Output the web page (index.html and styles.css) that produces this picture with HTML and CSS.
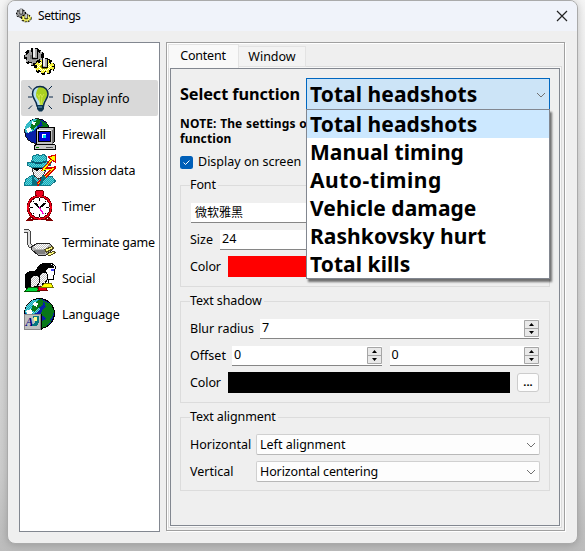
FILE: index.html
```html
<!DOCTYPE html>
<html lang="en">
<head>
<meta charset="utf-8">
<title>Settings</title>
<link rel="stylesheet" href="styles.css">
</head>
<body>
<svg class="defs" width="0" height="0">
  <defs>
    <pattern id="dither" width="2" height="2" patternUnits="userSpaceOnUse"><rect width="2" height="2" fill="#c0c0c0"/><path d="M0 0h1v1H0zM1 1h1v1H1z" fill="#fff"/></pattern>
    <pattern id="gold" width="2" height="2" patternUnits="userSpaceOnUse"><rect width="2" height="2" fill="#ffff00"/><path d="M0 0h1v1H0zM1 1h1v1H1z" fill="#fff"/></pattern>
    <pattern id="teal" width="2" height="2" patternUnits="userSpaceOnUse"><rect width="2" height="2" fill="#00b0c0"/><path d="M0 0h1v1H0zM1 1h1v1H1z" fill="#70c8d0"/></pattern>
    <symbol id="gears" viewBox="0 0 32 32">
      <ellipse cx="10" cy="11" rx="8.5" ry="6.8" fill="none" stroke="#000" stroke-width="4" stroke-dasharray="3.5 2"/>
      <ellipse cx="10" cy="11" rx="8" ry="6.3" fill="#999" stroke="#000"/>
      <ellipse cx="10" cy="11" rx="8" ry="6.3" fill="none" stroke="#a8a8a8" stroke-width="3" stroke-dasharray="2 3.5" stroke-dashoffset="-.7"/>
      <ellipse cx="10" cy="11" rx="5.500" ry="4" fill="#a0a0a0"/><ellipse cx="10" cy="11" rx="4" ry="3" fill="#777"/>
      <path d="M8 2h5v10H8z" fill="#aaa" stroke="#000"/><path d="M9 2h2v9H9z" fill="#eee"/>
      <ellipse cx="20.500" cy="20.500" rx="8.800" ry="6.200" fill="none" stroke="#000" stroke-width="4" stroke-dasharray="3.5 2"/>
      <ellipse cx="20.500" cy="20.500" rx="8" ry="5.600" fill="url(#gold)" stroke="#000"/>
      <ellipse cx="20.500" cy="20.500" rx="8" ry="5.500" fill="none" stroke="#f4ef40" stroke-width="3" stroke-dasharray="2.6 2.9" stroke-dashoffset="-.5"/>
      <ellipse cx="20.500" cy="20.500" rx="6.500" ry="4.300" fill="url(#gold)"/>
      <ellipse cx="20.500" cy="20.500" rx="4" ry="2.600" fill="#808000"/>
      <path d="M18 12h5v9h-5z" fill="#aaa" stroke="#000"/><path d="M19 12h2v8h-2z" fill="#eee"/>
    </symbol>
    <symbol id="globe" viewBox="0 0 32 32">
      <circle cx="15.500" cy="15.500" r="14.800" fill="#0820a8" stroke="#000"/>
      <path d="M9 2 15 1l3 4-3 3 1 3-4 4-5 2-5 1L1 12 3 7z" fill="url(#teal)"/>
      <path d="m12 4 5-3 3 2-2 5-4 2-3 4-4-2 2-5zM20 3l7 3 3 7-2 7-4 3-3-4-4-2 1-5 4-3z" fill="#087818"/>
      <path d="m10 4 4 1-1 4-4-2zM2 13l5-2 2 4-4 3z" fill="#fff"/>
      <path d="m18 23 7-3 2 3-6 6-4 1z" fill="#087818"/>
    </symbol>
  </defs>
</svg>
<div class="window">
  <header class="titlebar">
    <svg class="app-icon"><use href="#gears"/></svg>
    <span class="title">Settings</span>
    <svg class="close" viewBox="0 0 12 12"><path d="m1 1 10 10M11 1 1 11" stroke="#222" stroke-width="1.2"/></svg>
  </header>
  <main class="body">
    <nav class="sidebar">
      <a class="item"><svg class="icon"><use href="#gears"/></svg><span>General</span></a>
      <a class="item selected"><svg class="icon bulb" viewBox="0 0 32 32">
        <path d="m4.500 4 3.500 3.500M28 4l-3.500 3.500M4 15h4M25 15h4M4.500 27 8 23.500M28 27l-3.500-3.500" stroke="#0b2948" fill="none"/>
        <path d="M16 4.500c-5 0-7.500 3.500-7.500 7.500 0 5 4 6 4.500 12h6.500c.5-6 4.500-7 4.500-12 0-4-3-7.500-8-7.500z" fill="#b4dcf2"/>
        <path d="M15 5c6-1 9 3 8.500 7.500-.5 4-4 5-5 11L16 23c1-4-4-6-4-10 0-3 1-6 3-8z" fill="#a9d020"/>
        <path d="m13 12 2 3 1.500-3 1.500 3 2-3M15 15l1 8M18 15l-1 8" fill="none" stroke="#e4ec60" stroke-width=".7"/>
        <path d="M16 4.500c-5 0-7.500 3.500-7.500 7.500 0 5 4 6 4.500 12h6.500c.5-6 4.500-7 4.500-12 0-4-3-7.500-8-7.500z" fill="none" stroke="#0b2948" stroke-width="1.500"/>
        <path d="M13 23h7v4l-2 2.500h-3L13 27z" fill="#0b3450"/><path d="M14 25h4" stroke="#70a8c8"/>
      </svg><span>Display info</span></a>
      <a class="item"><svg class="icon" viewBox="0 0 32 32">
        <use href="#globe" width="27" height="27"/>
        <path d="M12.500 11.500 15 9.500h15v14l-2.500 3.500h-15z" fill="#c0c0c0" stroke="#000"/>
        <path d="M28 12.500v14l2-3v-14z" fill="#707070"/>
        <path d="M14 13h12v10H14z" fill="#0000d8" stroke="#000"/><path d="M13 12.500h14" stroke="#fff"/>
        <path d="M18 16h4v4h-4z" fill="#00d8f0"/><path d="M18 16h4v1h-3v3h-1z" fill="#fff"/>
        <path d="M10 28.500 12 26.500h18l1.500 1v3.500H10z" fill="#c8c8c8" stroke="#000"/><path d="M22 29.500h7" stroke="#555"/><path d="M12 29.500h3" stroke="#080"/>
      </svg><span>Firewall</span></a>
      <a class="item"><svg class="icon" viewBox="0 0 32 32">
        <path d="m.5 31.500 1-6 7-4.500h11l9 2 3 4-5 4.500z" fill="url(#teal)" stroke="#107888"/>
        <path d="M8.500 9h13v8l-3 6-4 2-4-3-2-5z" fill="url(#dither)" stroke="#333"/>
        <path d="M7 12h7l2 1 2-1h5v3l-3 2-3-2h-1l-3 2-4-2z" fill="#000"/>
        <path d="M7.500 8 9 2l4-1.500 3 1 4-1 2 2 1 5 4 1-1 3-7 2H8L3 11l.5-2z" fill="url(#teal)" stroke="#107888"/>
        <path d="m8 7 5 1.500L22 7v1.500l-9 2-5-2z" fill="#085870"/>
        <path d="m13 31 17-17-10 1L30 3" stroke="#d80000" stroke-width="3" fill="none"/><path d="m13 31 16-16-10 1L30 3" stroke="#ff0" stroke-width="1.200" fill="none"/>
        <path d="m24 3 7-2v7z" fill="#ff0" stroke="#d80000"/><path d="m8 21 5 7 1 3H8zM19 20l3 4-5 7h-2z" fill="#087080"/>
      </svg><span>Mission data</span></a>
      <a class="item"><svg class="icon" viewBox="0 0 32 32">
        <path d="m7 27-3 3h4l3-2M24 27l3 3h-4l-3-2" stroke="#800000" stroke-width="2" fill="none"/>
        <path d="M14 5h3v3h-3z" fill="#b00"/><ellipse cx="15.500" cy="3" rx="4.500" ry="2.600" fill="#f00020" stroke="#700000"/>
        <circle cx="15.500" cy="17.500" r="11.500" fill="#fff" stroke="#600" stroke-width="2.800"/><circle cx="15.500" cy="17.500" r="11.500" fill="none" stroke="#f00018" stroke-width="1.400"/>
        <path d="M15.500 8v3M15.500 24v3M6 17.500h3M22 17.500h3M9 11l1 1M22 11l-1 1M9 24l1-1M22 24l-1-1" stroke="#000"/>
        <path d="m11 13 4.500 5 6-5" stroke="#000" stroke-width="1.800" fill="none"/><path d="m15.500 17.500 4 7" stroke="#f0c" stroke-width="1.300"/>
      </svg><span>Timer</span></a>
      <a class="item"><svg class="icon" viewBox="0 0 32 32">
        <path d="M0 5h3q2 0 2 2v9q0 5 5 5" stroke="#444" stroke-width="4" fill="none"/><path d="M0 5h3q2 0 2 2v9q0 5 5 5" stroke="#e0e0e0" stroke-width="2" fill="none"/>
        <path d="m7.500 21 6-4h11l2.500 2v6l-5 4h-8l-6-5z" fill="#b4b4b4" stroke="#222"/><path d="m9 21 5-3h10l2 1-5 4h-8z" fill="url(#dither)"/>
        <path d="m9 24 5 4h7v-4h-8z" fill="#808080"/>
        <path d="m20.500 23.500 8-3 1 2-7 3.500zM23 28l7-3 1.500 1.500L25 30z" fill="#ffff80" stroke="#554c20"/>
      </svg><span>Terminate game</span></a>
      <a class="item"><svg class="icon" viewBox="0 0 32 32">
        <path d="M15 4c4-4 13-4 16 0v3l-1 2 1 3-2 2v3h-5l1 5-7-2z" fill="#fff" stroke="#000"/>
        <path d="M12 9c0-8 13-9 18-5v2h-6l-3 3v7l-5 4z" fill="#000"/>
        <path d="M11 11c4-5 11-4 12 1v6l-2 3h-3l2 3-8 1z" fill="url(#dither)" stroke="#000"/>
        <path d="M9 10c3-4 9-5 12-2l1 3h-4l-2 3v6l-4 2z" fill="#000"/>
        <path d="M3 12c5-3 12-1 12 3v6l-2 3h-3l1 3H3z" fill="url(#dither)" stroke="#000"/>
        <path d="M1 26V13c2-5 11-6 15-1l-1 2H9l-2 3v7l-3 4z" fill="#000"/>
        <path d="m1 29 3-3 9-1 2 4z" fill="#00d83a" stroke="#050"/><path d="m14 28 1-3 6-1 2 4z" fill="#f00018" stroke="#700"/><path d="m17 25 3-3 7-1 2 4z" fill="#ff0" stroke="#770"/>
        <path d="M27 7h3v2h-3z" fill="#44f"/>
      </svg><span>Social</span></a>
      <a class="item"><svg class="icon" viewBox="0 0 32 32">
        <use href="#globe" width="32" height="32"/>
        <path d="M.500 16.500h16v15H.5z" fill="#c0c0c0" stroke="#888"/><path d="M17 16v16H0" fill="none" stroke="#000"/>
        <text x="1.500" y="28" class="glyph">A</text><path d="M9 18h6v6l-2 4H8v-2l3-1z" fill="#087880"/><path d="M10 19h3v4h-3z" fill="#ff8"/>
      </svg><span>Language</span></a>
    </nav>
    <section class="tabs">
      <div class="tabbar"><span class="tab active">Content</span><span class="tab">Window</span></div>
      <div class="page">
        <div class="function-row">
          <span class="heading">Select function</span>
          <div class="function-select">
            <span class="option chosen">Total headshots</span><svg class="chevron" viewBox="0 0 10 6"><path d="m1 1 4 4 4-4"/></svg>
            <div class="popup">
              <div class="option current">Total headshots</div><div class="option">Manual timing</div><div class="option auto">Auto-timing</div><div class="option">Vehicle damage</div><div class="option">Rashkovsky hurt</div><div class="option">Total kills</div>
            </div>
          </div>
        </div>
        <p class="note">NOTE: The settings o<br>function</p>
        <label class="check"><svg viewBox="0 0 13 13"><rect width="13" height="13" rx="2.500" fill="#005fb8"/><path d="m3.500 6.500 2 2 4-4" fill="none" stroke="#fff"/></svg>Display on screen</label>
        <fieldset class="font-group">
          <legend>Font</legend>
          <div class="row"><span class="input cjk">微软雅黑</span></div>
          <div class="row"><span class="w-size">Size</span><span class="input">24</span></div>
          <div class="row"><span class="w-color">Color</span><span class="swatch red"></span></div>
        </fieldset>
        <fieldset class="shadow-group">
          <legend>Text shadow</legend>
          <div class="row"><span class="w-blur">Blur radius</span><span class="input">7<svg class="spin" viewBox="0 0 15 17"><path d="M.5.5h14v16H.5zM.5 8.500h14" fill="#e9e9e9" stroke="#a6a6a6"/><path d="M5 6h5L7.500 3zM5 11h5l-2.500 3z"/></svg></span></div>
          <div class="row"><span class="w-offset">Offset</span><span class="input">0<svg class="spin" viewBox="0 0 15 17"><path d="M.5.5h14v16H.5zM.5 8.500h14" fill="#e9e9e9" stroke="#a6a6a6"/><path d="M5 6h5L7.500 3zM5 11h5l-2.500 3z"/></svg></span><span class="input second">0<svg class="spin" viewBox="0 0 15 17"><path d="M.5.5h14v16H.5zM.5 8.500h14" fill="#e9e9e9" stroke="#a6a6a6"/><path d="M5 6h5L7.500 3zM5 11h5l-2.500 3z"/></svg></span></div>
          <div class="row"><span class="w-color">Color</span><span class="swatch"></span><span class="more">...</span></div>
        </fieldset>
        <fieldset class="align-group">
          <legend>Text alignment</legend>
          <div class="row"><span class="w-align">Horizontal</span><span class="select">Left alignment<svg class="chevron" viewBox="0 0 10 6"><path d="m1 1 4 4 4-4"/></svg></span></div>
          <div class="row"><span class="w-align">Vertical</span><span class="select centering">Horizontal centering<svg class="chevron" viewBox="0 0 10 6"><path d="m1 1 4 4 4-4"/></svg></span></div>
        </fieldset>
      </div>
    </section>
  </main>
</div>
</body>
</html>
```
FILE: styles.css
```css
* { box-sizing: border-box; }
body { margin: 0; width: 585px; height: 551px; overflow: hidden; padding: 0 7px; background: linear-gradient(#f5f5f5, #e4e4e4 30%, #cecece 85%, #bcbcbc); font: 12.5px/16px "Noto Sans", "Noto Sans CJK SC", sans-serif; color: #000; }
.defs { position: absolute; }
.window { width: 571px; height: 544px; border: 1px solid #aaa; border-radius: 8px; background: #efefef; overflow: hidden; box-shadow: 0 1px 8px #0003; }
.titlebar { height: 30px; display: flex; align-items: center; padding: 0 9px 0 8px; background: #f0f3fa; font-size: 12px; }
.app-icon { width: 16px; height: 16px; margin-right: 6px; }
.title { letter-spacing: -.4px; }
.close { width: 12px; height: 12px; margin-left: auto; }
.body { display: flex; gap: 6px; padding: 11px 12px 0 11px; }
.sidebar { width: 141px; height: 490px; border: 1px solid #828790; background: #fff; padding: 1px; }
.item { display: flex; height: 36px; align-items: center; padding-left: 3px; gap: 6px; white-space: nowrap; letter-spacing: -.1px; }
.item.selected { background: #d9d9d9; border-radius: 2px; }
.item:nth-child(6) { letter-spacing: -.25px; }
.icon { width: 32px; height: 32px; flex: none; shape-rendering: crispEdges; }
.bulb { shape-rendering: auto; }
.item span { padding-top: 1px; }
.glyph { font: italic bold 12px "Liberation Serif", serif; fill: #000080; }
.tabs { width: 399px; height: 489px; border: 1px solid #a0a0a0; padding: 1px 4px 4px 3px; box-shadow: 1px 1px #fff, inset 1px 1px #fff; }
.tabbar { height: 24px; display: flex; align-items: flex-end; margin-left: -2px; }
.tab { width: 67px; height: 21px; margin-bottom: 1px; border: 1px solid #e3e3e3; border-left: 0; background: #f3f3f3; display: flex; align-items: center; justify-content: center; }
.tab.active { width: 71px; height: 24px; margin: 0; padding-bottom: 2px; padding-right: 1px; letter-spacing: -.2px; border: 1px solid #e3e3e3; border-bottom: 0; background: #f9f9f9; }
.page { height: 458px; width: 390px; border: 1px solid #828790; box-shadow: 0 0 0 1px #f9f9f9, 0 0 0 2px #dcdcdc; padding: 9px 9px 0; }
.function-row { display: flex; height: 32px; align-items: center; }
.heading { width: 126px; white-space: nowrap; font-size: 16.3px; font-weight: 700; letter-spacing: -.1px; }
.function-select { position: relative; width: 244px; height: 32px; display: flex; align-items: center; border: 1px solid #0067c0; border-bottom: 0; background: #cce4f7; }
.option { height: 28px; padding-left: 3px; font-size: 21px; line-height: 29px; font-weight: 700; white-space: nowrap; letter-spacing: .07px; }
.chosen { margin-top: -2px; }
.auto { letter-spacing: .5px; }
.popup { position: absolute; z-index: 1; left: -1px; top: 30px; width: 244px; height: 170px; background: #fff; border: 1px solid #828790; box-shadow: 2px 3px 2px #0008; }
.current { background: #cce8ff; }
.chevron { width: 10px; height: 6px; margin-left: auto; margin-right: 3px; fill: none; stroke: #707070; }
.note { margin: 6px 0 8px; font-size: 12px; line-height: 15px; font-weight: 700; letter-spacing: .12px; word-spacing: .4px; white-space: nowrap; }
.check { display: flex; height: 16px; align-items: center; gap: 5px; }
.check svg { width: 13px; height: 13px; }
fieldset { position: relative; display: grid; align-content: start; gap: 6px; margin: 0; width: 370px; border: 1px solid #dcdcdc; padding: 0 10px 0 9px; }
legend { padding: 0 2px 0 0; height: 16px; margin-left: 0; line-height: 16px; letter-spacing: -.1px; }
.row { display: flex; align-items: center; height: 21px; }
.font-group { height: 110px; margin-top: 7px; }
.font-group legend + .row, .shadow-group legend + .row { margin-top: 9px; }
.shadow-group { height: 110px; margin-top: 6px; }
.align-group { height: 82px; margin-top: 6px; }
.align-group legend + .row { margin-top: 9px; }
.input { flex: 1; height: 20px; display: flex; align-items: center; background: #fff; border-bottom: 1px solid #868686; padding-left: 2px; }
.cjk { padding-left: 4px; font-size: 12px; font-family: "Noto Sans CJK SC", sans-serif; margin-left: 1px; }
.second { margin-left: 8px; }
.spin { width: 15px; height: 17px; margin: 0 0 0 auto; }
.w-size { width: 30px; }
.w-color { width: 38px; letter-spacing: -.1px; }
.w-blur { width: 70px; }
.w-offset { width: 42px; }
.w-align { width: 66px; }
.swatch { flex: 1; height: 21px; background: #000; }
.red { background: #f00; }
.more { width: 22px; height: 19px; margin-left: 7px; border: 1px solid #ccc; border-radius: 3px; background: #fdfdfd; text-align: center; line-height: 16px; font-weight: 700; font-size: 11px; }
.select { flex: 1; height: 21px; margin-right: -1px; display: flex; align-items: center; background: #fdfdfd; border: 1px solid #d0d0d0; border-bottom-color: #b8b8b8; border-radius: 2px; padding-left: 3px; }
.centering { letter-spacing: -.12px; }
```
